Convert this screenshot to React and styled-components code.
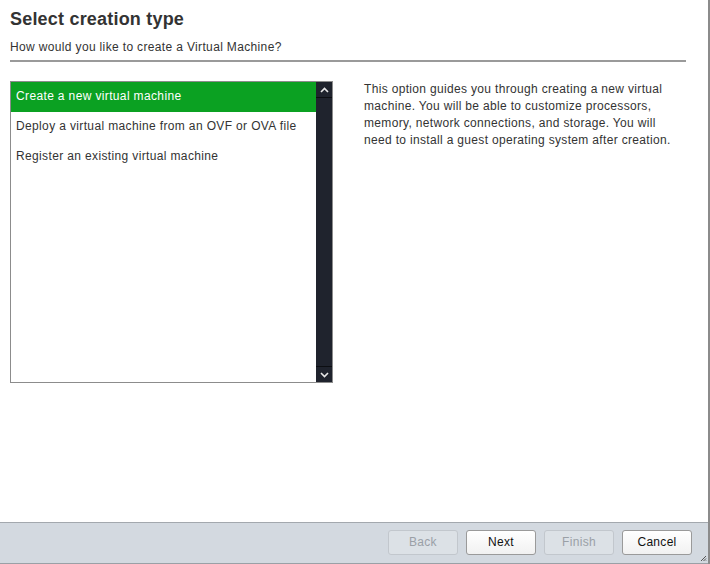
import React, { useState } from "react";
import styled, { createGlobalStyle } from "styled-components";

const GlobalStyle = createGlobalStyle`
  html, body {
    margin: 0;
    padding: 0;
    background: #fff;
  }
  body {
    font-family: "Liberation Sans", Arial, sans-serif;
  }
`;

const Dialog = styled.div`
  width: 710px;
  height: 564px;
  box-sizing: border-box;
  display: flex;
  flex-direction: column;
  background: #fff;
  border-right: 2px solid #8b8b8b;
`;

const Content = styled.div`
  flex: 1;
  padding: 8px 22px 0 10px;
`;

const Title = styled.h1`
  margin: 0;
  font-size: 18px;
  line-height: 22px;
  font-weight: bold;
  letter-spacing: 0.2px;
  color: #333;
`;

const Subtitle = styled.div`
  margin-top: 10px;
  font-size: 12px;
  line-height: 14px;
  letter-spacing: 0.35px;
  color: #333;
`;

const Divider = styled.hr`
  margin: 6px 0 0;
  border: none;
  border-top: 2px solid #9a9a9a;
  height: 0;
`;

const Body = styled.div`
  display: flex;
  align-items: flex-start;
  margin-top: 19px;
`;

const ListBox = styled.div`
  width: 323px;
  height: 302px;
  box-sizing: border-box;
  border: 1px solid #8c8c8c;
  display: flex;
`;

const Items = styled.ul`
  flex: 1;
  margin: 0;
  padding: 0;
  list-style: none;
`;

const Item = styled.li`
  height: 30px;
  line-height: 28px;
  padding-left: 5px;
  font-size: 12px;
  letter-spacing: 0.36px;
  color: ${(p) => (p.$selected ? "#fff" : "#333")};
  background: ${(p) => (p.$selected ? "#0ba122" : "transparent")};
  cursor: default;
`;

const Scrollbar = styled.div`
  width: 16px;
  background: #1f232d;
  display: flex;
  flex-direction: column;
  justify-content: space-between;
`;

const ScrollButton = styled.div`
  height: 15px;
  display: flex;
  align-items: center;
  justify-content: center;
  border-bottom: ${(p) => (p.$top ? "1px solid #0c0e12" : "none")};
  border-top: ${(p) => (p.$top ? "none" : "1px solid #0c0e12")};
`;

const Description = styled.p`
  margin: 0 0 0 31px;
  width: 310px;
  font-size: 12px;
  line-height: 17px;
  letter-spacing: 0.33px;
  color: #333;
`;

const Footer = styled.div`
  height: 42px;
  box-sizing: border-box;
  background: #d3d9e0;
  border-top: 1px solid #a3a8ae;
  border-bottom: 1px solid #9aa0a6;
  display: flex;
  align-items: center;
  justify-content: flex-end;
  gap: 8px;
  padding: 0 16px 2px 0;
  position: relative;
`;

const Button = styled.button`
  width: 70px;
  height: 25px;
  box-sizing: border-box;
  font-family: "Liberation Sans", Arial, sans-serif;
  font-size: 12px;
  letter-spacing: 0.3px;
  border-radius: 3px;
  padding: 0;
  color: ${(p) => (p.disabled ? "#9aa0a6" : "#111")};
  background: ${(p) =>
    p.disabled ? "#dce1e6" : "linear-gradient(#ffffff, #f1f1f1)"};
  border: 1px solid ${(p) => (p.disabled ? "#c2c7cd" : "#9a9a9a")};
`;

const Grip = styled.svg`
  position: absolute;
  right: 1px;
  bottom: 1px;
`;

const options = [
  "Create a new virtual machine",
  "Deploy a virtual machine from an OVF or OVA file",
  "Register an existing virtual machine",
];

function Chevron({ up }) {
  return (
    <svg width="9" height="6" viewBox="0 0 9 6">
      <path
        d={up ? "M1 5 L4.5 1.5 L8 5" : "M1 1 L4.5 4.5 L8 1"}
        fill="none"
        stroke="#e8e8e8"
        strokeWidth="1.6"
      />
    </svg>
  );
}

export default function App() {
  const [selected, setSelected] = useState(0);

  return (
    <>
      <GlobalStyle />
      <Dialog>
        <Content>
          <Title>Select creation type</Title>
          <Subtitle>How would you like to create a Virtual Machine?</Subtitle>
          <Divider />
          <Body>
            <ListBox>
              <Items>
                {options.map((opt, i) => (
                  <Item
                    key={opt}
                    $selected={selected === i}
                    onClick={() => setSelected(i)}
                  >
                    {opt}
                  </Item>
                ))}
              </Items>
              <Scrollbar>
                <ScrollButton $top>
                  <Chevron up />
                </ScrollButton>
                <ScrollButton>
                  <Chevron />
                </ScrollButton>
              </Scrollbar>
            </ListBox>
            <Description>
              This option guides you through creating a new virtual machine.
              You will be able to customize processors, memory, network
              connections, and storage. You will need to install a guest
              operating system after creation.
            </Description>
          </Body>
        </Content>
        <Footer>
          <Button disabled>Back</Button>
          <Button>Next</Button>
          <Button disabled>Finish</Button>
          <Button>Cancel</Button>
          <Grip width="7" height="7" viewBox="0 0 7 7">
            <path d="M6 1 L1 6 M6 3.5 L3.5 6 M6 5.5 L5.5 6" stroke="#555" strokeWidth="1" />
          </Grip>
        </Footer>
      </Dialog>
    </>
  );
}
